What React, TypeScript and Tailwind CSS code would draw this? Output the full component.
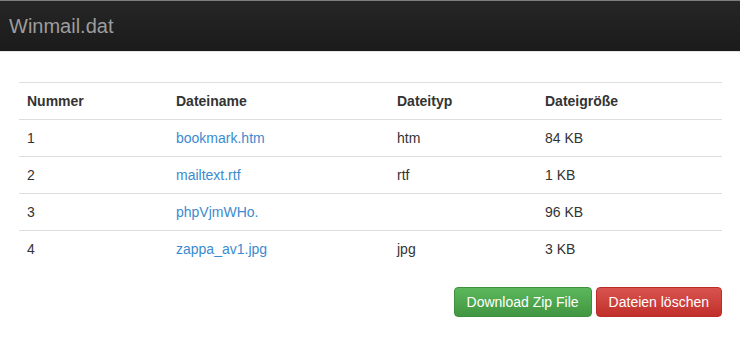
import React from 'react';

const files = [
  { nr: 1, name: 'bookmark.htm', type: 'htm', size: '84 KB' },
  { nr: 2, name: 'mailtext.rtf', type: 'rtf', size: '1 KB' },
  { nr: 3, name: 'phpVjmWHo.', type: '', size: '96 KB' },
  { nr: 4, name: 'zappa_av1.jpg', type: 'jpg', size: '3 KB' },
];

export default function App() {
  return (
    <div className="min-h-screen bg-white font-['Liberation_Sans',Arial,sans-serif] text-[14px] leading-5 text-[#333]">
      <div className="h-[52px] border-t border-[#7d7d7d] border-b border-b-[#e4e4e4] bg-gradient-to-b from-[#262626] to-[#1b1b1b] flex items-center px-[9px]">
        <span className="text-[20px] text-[#9d9d9d]">Winmail.dat</span>
      </div>

      <div className="pl-[19px] pr-[18px] pt-[30px]">
        <table className="w-full border-collapse">
          <colgroup>
            <col className="w-[149px]" />
            <col className="w-[221px]" />
            <col className="w-[148px]" />
            <col />
          </colgroup>
          <thead>
            <tr className="border-t border-b border-[#ddd]">
              <th className="text-left font-bold p-2">Nummer</th>
              <th className="text-left font-bold p-2">Dateiname</th>
              <th className="text-left font-bold p-2">Dateityp</th>
              <th className="text-left font-bold p-2">Dateigröße</th>
            </tr>
          </thead>
          <tbody>
            {files.map((f) => (
              <tr key={f.nr} className="border-t border-[#ddd] first:border-t-0">
                <td className="p-2">{f.nr}</td>
                <td className="p-2">
                  <a href="#" className="text-[#3b8bd0]">
                    {f.name}
                  </a>
                </td>
                <td className="p-2">{f.type}</td>
                <td className="p-2">{f.size}</td>
              </tr>
            ))}
          </tbody>
        </table>

        <div className="flex justify-end gap-1 mt-5">
          <button className="h-[30px] px-3 rounded-[4px] border border-[#3e8f3e] bg-gradient-to-b from-[#5cb85c] to-[#419641] text-white">
            Download Zip File
          </button>
          <button className="h-[30px] px-3 rounded-[4px] border border-[#b92c28] bg-gradient-to-b from-[#d9534f] to-[#c12e2a] text-white">
            Dateien löschen
          </button>
        </div>
      </div>
    </div>
  );
}
